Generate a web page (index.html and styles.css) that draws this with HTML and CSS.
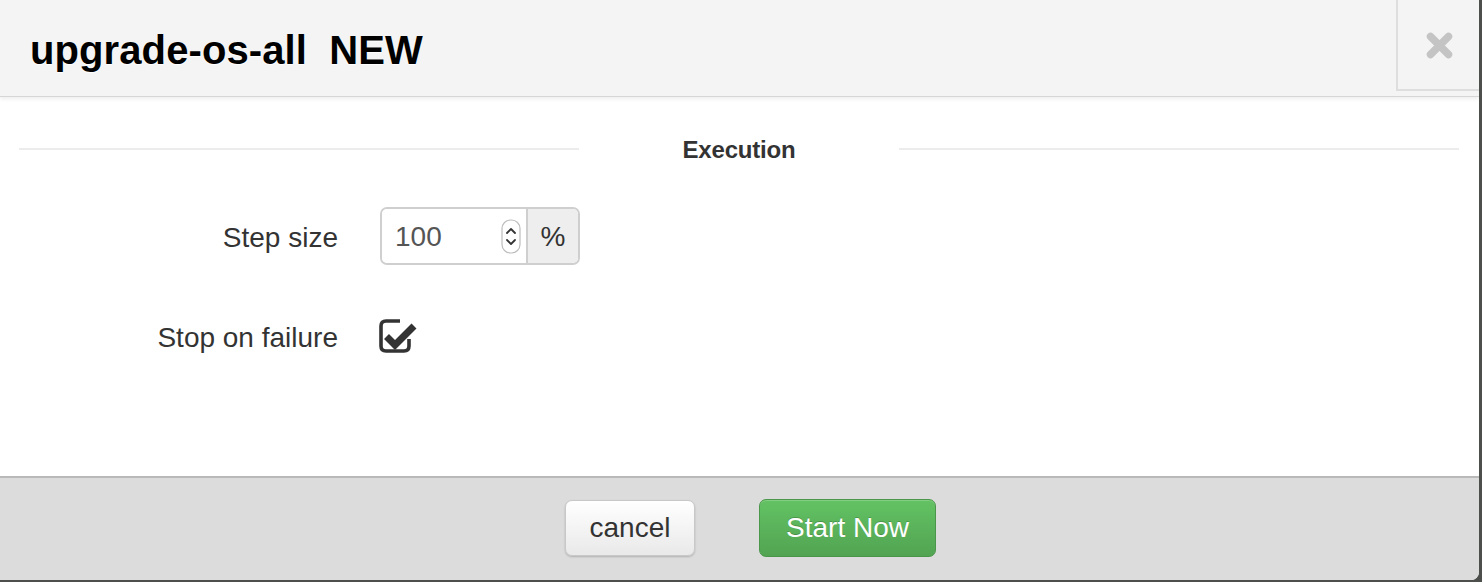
FILE: index.html
```html
<!DOCTYPE html>
<html>
<head>
<meta charset="utf-8">
<link rel="stylesheet" href="styles.css">
</head>
<body>
<div class="modal">
  <div class="modal-header">
    <h1 class="title">upgrade-os-all <span class="tag">NEW</span></h1>
    <button class="close" aria-label="close">
      <svg width="27" height="27" viewBox="0 0 27 27"><path d="M4.5 4.5 L22.5 22.5 M22.5 4.5 L4.5 22.5" stroke="#c4c4c4" stroke-width="7.5" stroke-linecap="round"/></svg>
    </button>
  </div>
  <div class="modal-body">
    <div class="legend">
      <div class="rule"></div>
      <div class="legend-text">Execution</div>
      <div class="rule"></div>
    </div>
    <div class="form-row step">
      <label class="label">Step size</label>
      <div class="input-group">
        <div class="input">
          <span class="value">100</span>
          <svg class="spinner" width="20" height="35" viewBox="0 0 20 35"><rect x="1" y="1" width="18" height="33" rx="8.5" fill="#fff" stroke="#bdbdbd" stroke-width="1.2"/><path d="M6 14 L10 10 L14 14 M6 21 L10 25 L14 21" fill="none" stroke="#333" stroke-width="1.8" stroke-linecap="round" stroke-linejoin="round"/></svg>
        </div>
        <div class="addon">%</div>
      </div>
    </div>
    <div class="form-row check">
      <label class="label">Stop on failure</label>
      <svg class="checkbox" width="40" height="36" viewBox="0 0 40 36"><path d="M22 3 H8 Q3 3 3 8 V28 Q3 33 8 33 H26 Q31 33 31 28 V21" fill="none" stroke="#333" stroke-width="3.6"/><path d="M8.5 18.5 L17 27 L36 8" fill="none" stroke="#333" stroke-width="7"/></svg>
    </div>
  </div>
  <div class="modal-footer">
    <button class="btn btn-default">cancel</button>
    <button class="btn btn-success">Start Now</button>
  </div>
</div>
</body>
</html>
```
FILE: styles.css
```css
html, body {
  margin: 0;
  padding: 0;
}
body {
  background: #4c4f4c;
  width: 1482px;
  height: 582px;
  overflow: hidden;
  font-family: "Liberation Sans", Arial, sans-serif;
}
.modal {
  width: 1479px;
  height: 580px;
  background: #fff;
  border-bottom-right-radius: 8px;
  overflow: hidden;
  display: flex;
  flex-direction: column;
}
.modal-header {
  height: 96px;
  flex: none;
  display: flex;
  background: #f4f4f4;
  border-bottom: 1px solid #d6d6d6;
  box-shadow: 0 2px 4px rgba(0, 0, 0, 0.07);
  position: relative;
  z-index: 1;
}
.title {
  margin: 0;
  padding-left: 30px;
  align-self: center;
  font-size: 40px;
  font-weight: bold;
  color: #000;
  line-height: 46px;
  margin-top: 4px;
  letter-spacing: 0.1px;
  text-shadow: 0 1px 1px #fff;
}
.tag {
  margin-left: 11px;
}
.close {
  margin-left: auto;
  align-self: flex-start;
  width: 83px;
  height: 91px;
  padding: 0;
  background: #f4f4f4;
  border: none;
  border-left: 2px solid #dedede;
  border-bottom: 2px solid #dedede;
  display: flex;
  align-items: center;
  justify-content: center;
}
.close svg {
  margin-left: 2px;
  margin-top: 2px;
}
.modal-body {
  flex: 1;
  padding: 0 20px 0 19px;
}
.legend {
  display: grid;
  grid-template-columns: 1fr 320px 1fr;
  align-items: center;
  height: 30px;
  margin-top: 37px;
}
.rule {
  height: 2px;
  background: #ececec;
}
.legend-text {
  text-align: center;
  font-size: 24px;
  font-weight: bold;
  color: #333;
  letter-spacing: -0.2px;
  padding-top: 2px;
}
.form-row {
  display: grid;
  grid-template-columns: 319px auto;
  column-gap: 42px;
  align-items: center;
  justify-content: start;
}
.form-row.step {
  margin-top: 43px;
  height: 58px;
}
.form-row.check {
  margin-top: 42px;
  height: 58px;
}
.label {
  text-align: right;
  font-size: 28px;
  color: #333;
  padding-top: 3px;
}
.input-group {
  display: flex;
  width: 200px;
  height: 58px;
  box-sizing: border-box;
  border: 2px solid #cfcfcf;
  border-radius: 7px;
  overflow: hidden;
}
.input {
  flex: 1;
  display: flex;
  align-items: center;
  padding-left: 13px;
  padding-right: 5px;
  background: #fff;
}
.value {
  flex: 1;
  font-size: 28px;
  color: #555;
  padding-top: 2px;
}
.spinner {
  display: block;
}
.addon {
  width: 52px;
  flex: none;
  background: #eee;
  border-left: 2px solid #cfcfcf;
  display: flex;
  align-items: center;
  justify-content: center;
  font-size: 28px;
  color: #333;
  padding-top: 2px;
  box-sizing: border-box;
}
.checkbox {
  display: block;
  margin-left: -2px;
}
.modal-footer {
  height: 104px;
  flex: none;
  background: #dcdcdc;
  border-top: 2px solid #b9b9b9;
  display: flex;
  align-items: center;
  justify-content: center;
  gap: 64px;
  padding-left: 22px;
  padding-bottom: 2px;
  box-sizing: border-box;
}
.btn {
  font-family: "Liberation Sans", Arial, sans-serif;
  font-size: 28px;
  border-radius: 7px;
  padding: 0;
  box-sizing: border-box;
}
.btn-default {
  width: 130px;
  height: 56px;
  color: #333;
  background: linear-gradient(#ffffff, #e9e9e9);
  border: 1px solid #c8c8c8;
  box-shadow: 0 1px 2px rgba(0, 0, 0, 0.2);
}
.btn-success {
  width: 177px;
  height: 58px;
  color: #fff;
  background: linear-gradient(#63c263, #52a452);
  border: 1px solid #4a964a;
  box-shadow: inset 0 1px 0 rgba(255, 255, 255, 0.2);
  text-shadow: 0 -1px 0 rgba(0, 0, 0, 0.2);
}
```
